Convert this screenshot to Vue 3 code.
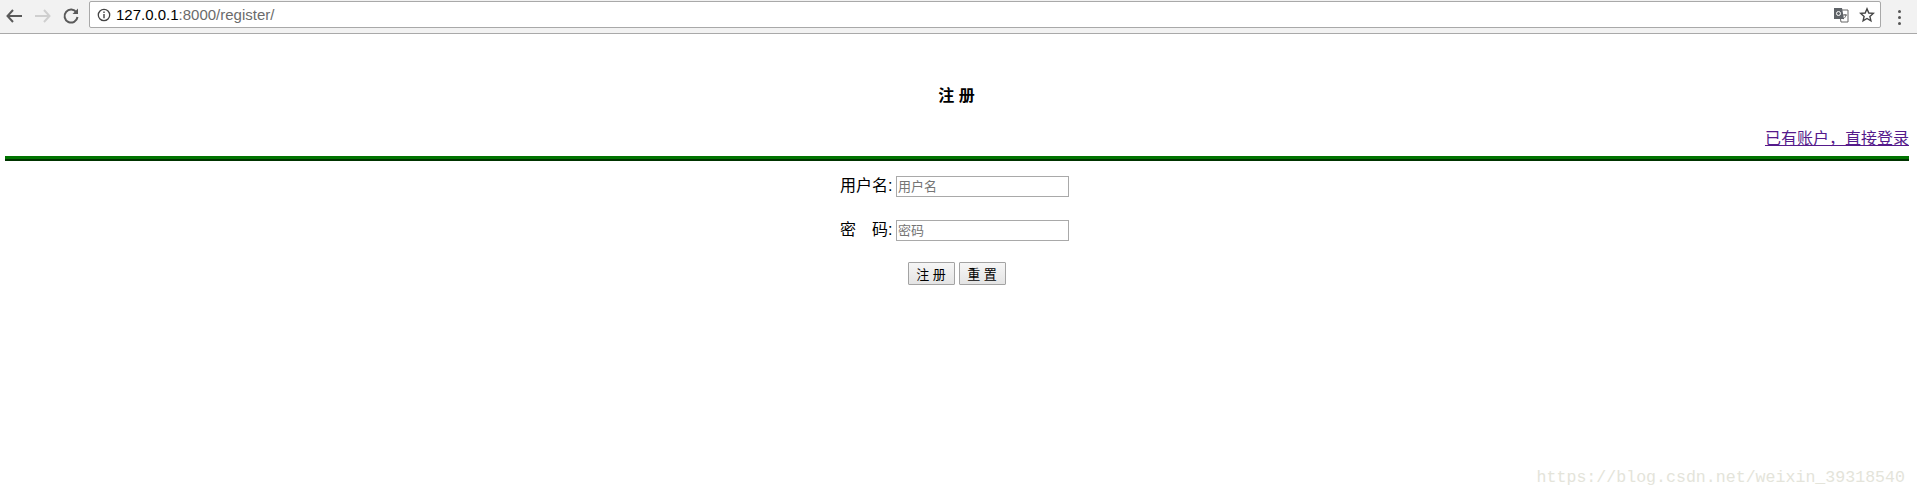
<script setup>
const fields = [
  { label: '用户名:', placeholder: '用户名', type: 'text', name: 'username' },
  { label: '密\u3000码:', placeholder: '密码', type: 'password', name: 'password' },
];
</script>

<template>
  <div class="window">
    <header class="toolbar">
      <svg class="nav back" width="18" height="16" viewBox="0 0 18 16">
        <path d="M8 2 2.500 8 8 14M3 8h14" fill="none" stroke="#5a5a5a" stroke-width="2" />
      </svg>
      <svg class="nav forward" width="18" height="16" viewBox="0 0 18 16">
        <path d="M10 2l5.500 6L10 14M15 8H1" fill="none" stroke="#cfcfcf" stroke-width="2" />
      </svg>
      <svg class="nav reload" width="18" height="18" viewBox="0 0 18 18">
        <path d="M14.500 5.500A6.500 6.500 0 1 0 15.500 10" fill="none" stroke="#5a5a5a" stroke-width="2" />
        <path d="M16 1.500V7h-5.500z" fill="#5a5a5a" />
      </svg>
      <div class="address">
        <svg class="info" width="14" height="14" viewBox="0 0 14 14">
          <circle cx="7" cy="7" r="5.700" fill="none" stroke="#444" stroke-width="1.300" />
          <path d="M7 6v4.200M7 3.600v1.400" stroke="#444" stroke-width="1.400" />
        </svg>
        <span class="url"><span class="host">127.0.0.1</span>:8000/register/</span>
        <svg class="translate" width="16" height="16" viewBox="0 0 16 16">
          <path d="M6 3h9v12H8z" fill="#fff" stroke="#666" />
          <path d="M1 1h8l2 11H1z" fill="#5f6368" />
          <circle cx="5.500" cy="6.500" r="2" fill="none" stroke="#fff" />
          <path d="M10 8h4M12 7v1M13 8c-.5 2-1.500 3-3 4" fill="none" stroke="#555" stroke-width=".9" />
        </svg>
        <svg class="star" width="16" height="16" viewBox="0 0 16 16">
          <path d="M8 1.800l1.800 4.200 4.500.4-3.400 3 1 4.400L8 11.500l-3.900 2.300 1-4.400-3.400-3 4.500-.4z" fill="none" stroke="#444" stroke-width="1.400" />
        </svg>
      </div>
      <div class="dots"><i></i><i></i><i></i></div>
    </header>

    <main class="page">
      <h3 class="title">注 册</h3>
      <p class="login"><a href="#">已有账户，直接登录</a></p>
      <div class="rule"></div>
      <form class="form" @submit.prevent>
        <div v-for="f in fields" :key="f.name" class="row">
          <label :for="f.name">{{ f.label }}</label>
          <input :id="f.name" :type="f.type" :placeholder="f.placeholder" />
        </div>
        <div class="actions">
          <button type="submit">注 册</button>
          <button type="reset">重 置</button>
        </div>
      </form>
    </main>

    <div class="watermark">https://blog.csdn.net/weixin_39318540</div>
  </div>
</template>

<style>
html,
body {
  margin: 0;
  background: #fff;
  overflow: hidden;
}
</style>

<style scoped>
.window {
  position: relative;
  height: 496px;
  font-family: "Liberation Sans", "Noto Sans CJK SC", sans-serif;
  font-size: 16px;
  color: #000;
}
.toolbar {
  display: flex;
  align-items: flex-start;
  height: 32px;
  padding-top: 1px;
  background: #f2f2f2;
  border-bottom: 1px solid #a9a9a9;
}
.nav {
  flex: none;
  margin-top: 7px;
}
.back {
  margin-left: 5px;
}
.forward {
  margin-left: 11px;
}
.reload {
  margin-left: 10px;
  margin-top: 6px;
}
.address {
  flex: none;
  display: flex;
  align-items: center;
  box-sizing: border-box;
  width: 1792px;
  height: 27px;
  margin-left: 9px;
  padding: 0 5px 0 7px;
  background: #fff;
  border: 1px solid #a9a9a9;
  border-radius: 2px;
}
.url {
  flex: 1;
  margin-left: 5px;
  font-size: 15px;
  color: #6b6b6b;
}
.host {
  color: #000;
}
.translate {
  margin-right: 10px;
}
.dots {
  display: flex;
  flex-direction: column;
  gap: 3px;
  margin: 9px 0 0 17px;
}
.dots i {
  width: 3px;
  height: 3px;
  background: #555;
  border-radius: 50%;
}
.page {
  padding: 0 8px 0 5px;
}
.title {
  margin: 0;
  padding-top: 52px;
  padding-right: 1px;
  height: 25px;
  line-height: 20px;
  font-size: 16px;
  font-weight: bold;
  text-align: center;
}
.login {
  margin: 16px 0 0;
  line-height: 23px;
  text-align: right;
}
.login a {
  color: #551a8b;
}
.rule {
  height: 3px;
  margin-top: 6px;
  background: #007400;
  border-bottom: 2px solid #003400;
}
.form {
  display: flex;
  flex-direction: column;
  align-items: center;
  padding: 15px 5px 0 0;
}
.row {
  display: flex;
  align-items: center;
  gap: 4px;
  height: 21px;
  margin-bottom: 23px;
}
.row label {
  width: 52px;
  padding-bottom: 5px;
  text-align: right;
  white-space: nowrap;
}
.row input {
  box-sizing: border-box;
  width: 173px;
  height: 21px;
  padding: 1px;
  border: 1px solid #a9a9a9;
  font-family: inherit;
  font-size: 13px;
  outline: none;
}
.row input::placeholder {
  color: #757575;
}
.actions {
  display: flex;
  gap: 4px;
  margin: -2px 0 0 4px;
}
.actions button {
  box-sizing: border-box;
  width: 47px;
  height: 23px;
  padding: 0;
  font-family: inherit;
  font-size: 13px;
  color: #000;
  background: linear-gradient(#f6f6f6, #e4e4e4);
  border: 1px solid #a3a3a3;
  border-radius: 1px;
}
.watermark {
  position: absolute;
  right: 12px;
  bottom: 9px;
  font-family: "Liberation Mono", monospace;
  font-size: 16.6px;
  color: #e4e4da;
  white-space: nowrap;
}
</style>
